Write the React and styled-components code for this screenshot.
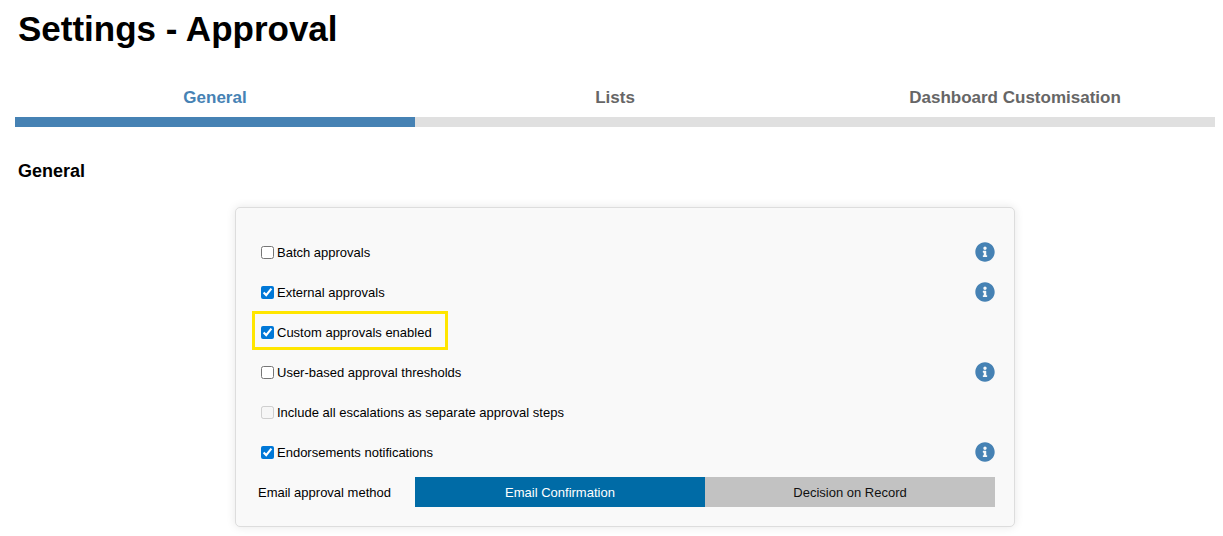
import { useState } from "react";
import styled, { createGlobalStyle } from "styled-components";
import { FaInfoCircle } from "react-icons/fa";

const GlobalStyle = createGlobalStyle`
  * {
    box-sizing: border-box;
  }

  body {
    margin: 0;
    background-color: #ffffff;
    color: #000000;
    font-family: "Liberation Sans", Arial, sans-serif;
    font-size: 13px;
  }
`;

const Page = styled.main`
  padding: 8px 8px 9px 15px;
`;

const Title = styled.h1`
  margin: 0;
  padding-left: 3px;
  font-size: 35px;
  line-height: 41px;
`;

const Tabs = styled.nav`
  display: flex;
  margin-top: 28px;
`;

const Tab = styled.button`
  flex: 1;
  height: 50px;
  padding: 2px 0 0;
  border: 0;
  border-bottom: 10px solid ${({ $active }) => ($active ? "#4682b4" : "#e0e0e0")};
  background: none;
  color: ${({ $active }) => ($active ? "#4682b4" : "#666666")};
  font-family: inherit;
  font-size: 17px;
  font-weight: bold;
  cursor: pointer;
`;

const SectionTitle = styled.h2`
  margin: 34px 0 0;
  padding-left: 3px;
  font-size: 18px;
  line-height: 20px;
`;

const CardWrapper = styled.div`
  display: flex;
  justify-content: center;
  padding-left: 20px;
  margin-top: 26px;
`;

const Card = styled.section`
  width: 780px;
  padding: 24px 19px 14px 16px;
  border: 1px solid #dddddd;
  border-radius: 5px;
  background-color: #f9f9f9;
  box-shadow: 0 0 10px rgba(0, 0, 0, 0.1);
`;

const Row = styled.div`
  display: flex;
  justify-content: space-between;
  align-items: center;
  height: 40px;
`;

const CheckLabel = styled.label`
  display: flex;
  align-items: center;
  align-self: flex-start;
  gap: 3px;
  height: 33px;
  margin: 2px 0 0 3px;
  padding: 3px 13px 0 6px;
  outline: ${({ $highlight }) => ($highlight ? "3px solid #ffe600" : "none")};
`;

const Checkbox = styled.input`
  width: 13px;
  height: 13px;
  margin: 0;
  accent-color: #0078d7;
`;

const InfoButton = styled.button`
  display: flex;
  padding: 0;
  border: 0;
  background: none;
  color: #4682b4;
  font-size: 20px;
  cursor: pointer;
`;

const MethodLabel = styled.span`
  padding-left: 6px;
`;

const MethodGroup = styled.div`
  display: flex;
  width: 580px;
`;

const MethodButton = styled.button`
  flex: 1;
  height: 30px;
  padding: 0;
  border: 0;
  background-color: ${({ $active }) => ($active ? "#006ba6" : "#c2c2c2")};
  color: ${({ $active }) => ($active ? "#ffffff" : "#111111")};
  font-family: inherit;
  font-size: 13px;
  cursor: pointer;
`;

const tabs = ["General", "Lists", "Dashboard Customisation"];

const methods = ["Email Confirmation", "Decision on Record"];

const options = [
  { id: "batch", label: "Batch approvals", info: true },
  { id: "external", label: "External approvals", checked: true, info: true },
  { id: "custom", label: "Custom approvals enabled", checked: true, highlight: true },
  { id: "thresholds", label: "User-based approval thresholds", info: true },
  {
    id: "escalations",
    label: "Include all escalations as separate approval steps",
    disabled: true,
  },
  { id: "endorsements", label: "Endorsements notifications", checked: true, info: true },
];

function OptionRow({ option }) {
  return (
    <Row>
      <CheckLabel htmlFor={option.id} $highlight={option.highlight}>
        <Checkbox
          type="checkbox"
          id={option.id}
          defaultChecked={option.checked}
          disabled={option.disabled}
        />
        {option.label}
      </CheckLabel>
      {option.info && (
        <InfoButton type="button" aria-label={`About ${option.label}`}>
          <FaInfoCircle />
        </InfoButton>
      )}
    </Row>
  );
}

function App() {
  const [tab, setTab] = useState(tabs[0]);
  const [method, setMethod] = useState(methods[0]);

  return (
    <Page>
      <GlobalStyle />
      <Title>Settings - Approval</Title>
      <Tabs>
        {tabs.map((name) => (
          <Tab key={name} type="button" $active={name === tab} onClick={() => setTab(name)}>
            {name}
          </Tab>
        ))}
      </Tabs>
      <SectionTitle>{tab}</SectionTitle>
      <CardWrapper>
        <Card>
          {options.map((option) => (
            <OptionRow key={option.id} option={option} />
          ))}
          <Row>
            <MethodLabel id="method-label">Email approval method</MethodLabel>
            <MethodGroup role="group" aria-labelledby="method-label">
              {methods.map((name) => (
                <MethodButton
                  key={name}
                  type="button"
                  $active={name === method}
                  aria-pressed={name === method}
                  onClick={() => setMethod(name)}
                >
                  {name}
                </MethodButton>
              ))}
            </MethodGroup>
          </Row>
        </Card>
      </CardWrapper>
    </Page>
  );
}

export default App;
